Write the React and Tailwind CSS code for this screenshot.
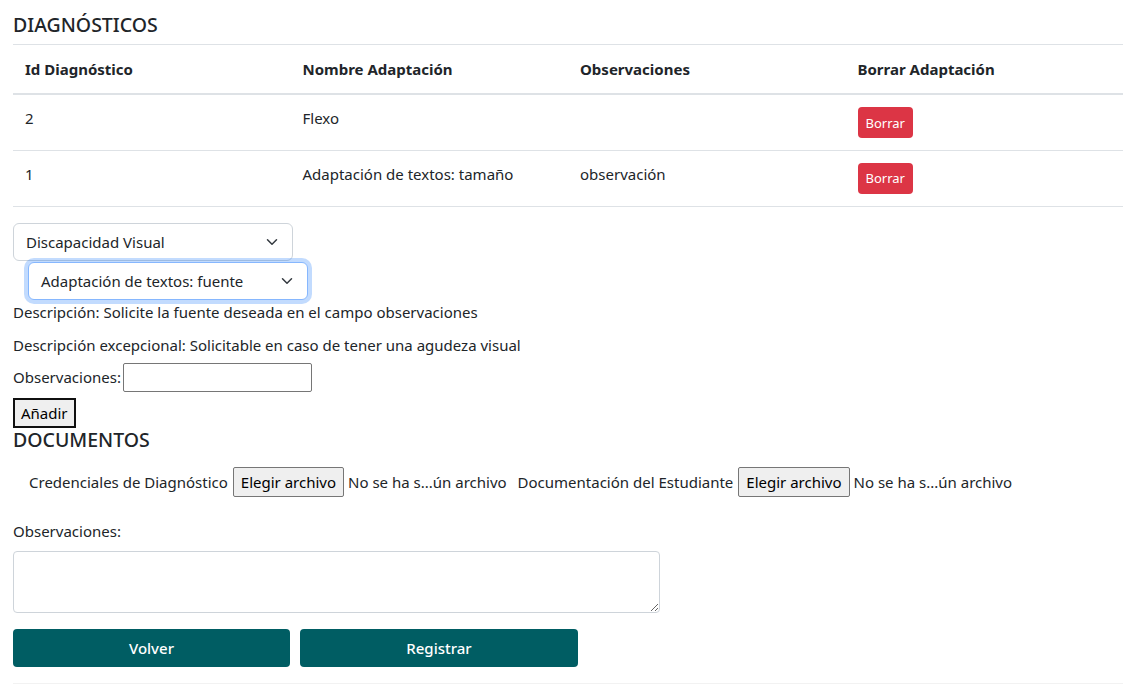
import { useState } from "react";

const rows = [
  { id: "2", nombre: "Flexo", obs: "" },
  { id: "1", nombre: "Adaptación de textos: tamaño", obs: "observación" },
];

function Chevron() {
  return (
    <svg width="16" height="12" viewBox="0 0 16 16" className="shrink-0">
      <path
        d="m2 5 6 6 6-6"
        fill="none"
        stroke="#343a40"
        strokeWidth="2"
        strokeLinecap="round"
        strokeLinejoin="round"
      />
    </svg>
  );
}

function FakeSelect({ value, focused, className = "" }) {
  return (
    <div
      className={`flex h-[38px] w-[280px] items-center justify-between rounded-[6px] border bg-white pl-[12px] pr-[12px] ${
        focused
          ? "border-[#86b7fe] shadow-[0_0_0_4px_rgba(13,110,253,0.25)]"
          : "border-[#ced4da]"
      } ${className}`}
    >
      <span>{value}</span>
      <Chevron />
    </div>
  );
}

function FileField({ label }) {
  return (
    <div className="flex items-center">
      <span className="mr-[5px]">{label}</span>
      <span className="flex h-[30px] items-center rounded-[2px] border border-[#767676] bg-[#efefef] px-[7px] text-[#000]">
        Elegir archivo
      </span>
      <span className="ml-[4px] text-[#212529]">No se ha s...ún archivo</span>
    </div>
  );
}

export default function App() {
  const [obs, setObs] = useState("");

  return (
    <main
      className="min-h-screen bg-white px-[13px] text-[15px] leading-[24px] text-[#212529]"
      style={{ fontFamily: '"Noto Sans", "Open Sans", sans-serif' }}
    >
      <h5 className="pt-[13px] text-[19.5px] leading-[24px] font-medium">DIAGNÓSTICOS</h5>
      <div className="mt-[7px] w-[1110px] border-t border-[#dee2e6]" />

      <table className="w-[1110px] table-fixed border-collapse">
        <thead>
          <tr className="border-b-2 border-[#dee2e6]">
            <th className="h-[49px] px-[12px] text-left font-bold">Id Diagnóstico</th>
            <th className="px-[12px] text-left font-bold">Nombre Adaptación</th>
            <th className="px-[12px] text-left font-bold">Observaciones</th>
            <th className="px-[12px] text-left font-bold">Borrar Adaptación</th>
          </tr>
        </thead>
        <tbody>
          {rows.map((r) => (
            <tr key={r.id} className="border-b border-[#dee2e6]">
              <td className="h-[56px] px-[12px] align-top pt-[11px]">{r.id}</td>
              <td className="px-[12px] align-top pt-[11px]">{r.nombre}</td>
              <td className="px-[12px] align-top pt-[11px]">{r.obs}</td>
              <td className="px-[12px] align-top pt-[12px]">
                <button className="h-[31px] rounded-[4px] bg-[#dc3545] px-[8px] text-[13px] leading-[20px] text-white">
                  Borrar
                </button>
              </td>
            </tr>
          ))}
        </tbody>
      </table>

      <div className="mt-[16px]">
        <FakeSelect value="Discapacidad Visual" />
        <FakeSelect value="Adaptación de textos: fuente" focused className="ml-[15px] mt-px" />
      </div>

      <p className="mt-0">Descripción: Solicite la fuente deseada en el campo observaciones</p>
      <p className="mt-[9px]">
        Descripción excepcional: Solicitable en caso de tener una agudeza visual
      </p>

      <div className="mt-[6px] flex items-center">
        <span className="mr-[2px]">Observaciones:</span>
        <input
          value={obs}
          onChange={(e) => setObs(e.target.value)}
          className="h-[29px] w-[189px] rounded-[2px] border border-[#767676] px-[2px] outline-none"
        />
      </div>

      <button className="mt-[6px] flex h-[30px] items-center border-2 border-[#101010] bg-[#efefef] px-[6px] text-black">
        Añadir
      </button>

      <h5 className="text-[19.5px] leading-[24px] font-medium">DOCUMENTOS</h5>

      <div className="mt-[15px] flex items-center gap-[11px] pl-[16px]">
        <FileField label="Credenciales de Diagnóstico" />
        <FileField label="Documentación del Estudiante" />
      </div>

      <p className="mt-[22px]">Observaciones:</p>
      <textarea className="mt-[8px] block h-[62px] w-[647px] rounded-[4px] border border-[#ced4da] outline-none" />

      <div className="mt-[16px] flex gap-[10px]">
        <button className="h-[38px] w-[277px] rounded-[4px] bg-[#005d63] font-medium text-white">
          Volver
        </button>
        <button className="h-[38px] w-[278px] rounded-[4px] bg-[#005d63] font-medium text-white">
          Registrar
        </button>
      </div>
      <div className="mt-[16px] w-[1110px] border-t border-[#f2f2f2]" />
    </main>
  );
}
